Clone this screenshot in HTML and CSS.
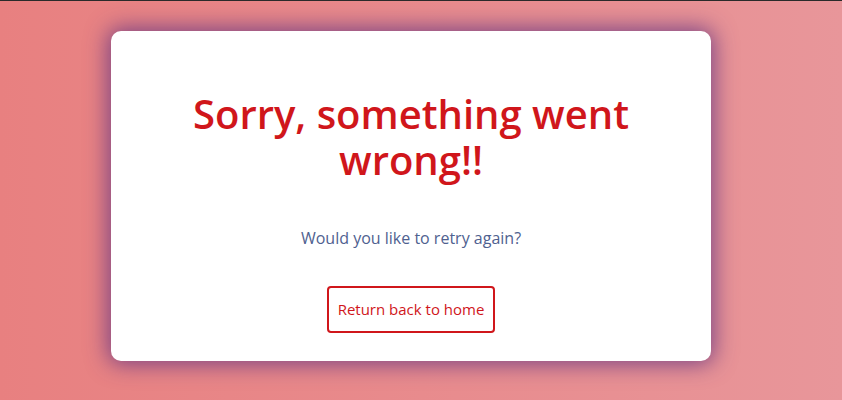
FILE: index.html
```html
<!DOCTYPE html>
<html>
<head>
<meta charset="utf-8">
<link rel="stylesheet" href="styles.css">
</head>
<body>
<div class="page">
  <div class="card">
    <h1 class="title">Sorry, something went wrong!!</h1>
    <p class="subtitle">Would you like to retry again?</p>
    <a class="btn" href="#">Return back to home</a>
  </div>
</div>
</body>
</html>
```
FILE: styles.css
```css
html, body {
  margin: 0;
  height: 100%;
}
body {
  background: linear-gradient(90deg, #e88080 0%, #e8969a 100%);
  border-top: 1px solid #2a2a2a;
  box-sizing: border-box;
  font-family: "Open Sans", "Lato", sans-serif;
  overflow: hidden;
}
.page {
  display: flex;
  justify-content: center;
  padding: 30px 20px 0 0;
}
.card {
  width: 600px;
  height: 330px;
  box-sizing: border-box;
  background: #fff;
  border-radius: 10px;
  box-shadow: 0 0 22px 3px rgba(105, 55, 130, 0.85);
  display: flex;
  flex-direction: column;
  align-items: center;
  padding: 60px 60px 0;
  text-align: center;
}
.title {
  margin: 0;
  font-size: 40px;
  line-height: 46px;
  font-weight: 600;
  color: #d0161b;
  width: 460px;
}
.subtitle {
  margin: 44px 0 0;
  font-size: 16px;
  line-height: 22px;
  color: #4f6190;
}
.btn {
  margin-top: 37px;
  border: 2px solid #d0161b;
  border-radius: 4px;
  padding: 12px 9px;
  font-size: 15px;
  line-height: 19px;
  color: #d0161b;
  text-decoration: none;
  white-space: nowrap;
}
```
